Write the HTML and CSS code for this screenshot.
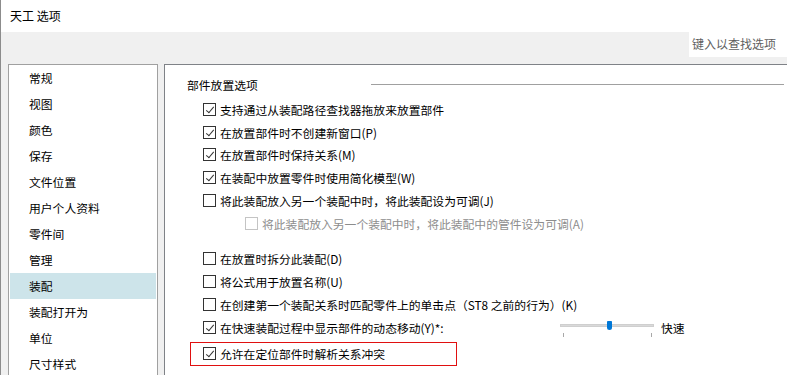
FILE: index.html
```html
<!DOCTYPE html>
<html lang="zh-CN">

<head>
    <meta charset="UTF-8">
    <meta name="viewport" content="width=device-width, initial-scale=1.0">
    <title>天工 选项</title>
    <link rel="stylesheet" href="styles.css">
</head>

<body>
    <div class="window">
        <div class="titlebar">天工 选项</div>
        <div class="toolbar">
            <div class="search">键入以查找选项</div>
        </div>
        <div class="main">
            <ul class="nav">
                <li>常规</li>
                <li>视图</li>
                <li>颜色</li>
                <li>保存</li>
                <li>文件位置</li>
                <li>用户个人资料</li>
                <li>零件间</li>
                <li>管理</li>
                <li class="active">装配</li>
                <li>装配打开为</li>
                <li>单位</li>
                <li>尺寸样式</li>
            </ul>
            <div class="page">
                <div class="group-head">
                    <span class="group-title">部件放置选项</span>
                    <span class="group-line"></span>
                </div>
                <div class="opt"><span class="cb checked"></span>支持通过从装配路径查找器拖放来放置部件</div>
                <div class="opt"><span class="cb checked"></span>在放置部件时不创建新窗口(P)</div>
                <div class="opt"><span class="cb checked"></span>在放置部件时保持关系(M)</div>
                <div class="opt"><span class="cb checked"></span>在装配中放置零件时使用简化模型(W)</div>
                <div class="opt"><span class="cb"></span>将此装配放入另一个装配中时，将此装配设为可调(J)</div>
                <div class="opt sub disabled"><span class="cb"></span>将此装配放入另一个装配中时，将此装配中的管件设为可调(A)</div>
                <div class="opt spaced"><span class="cb"></span>在放置时拆分此装配(D)</div>
                <div class="opt"><span class="cb"></span>将公式用于放置名称(U)</div>
                <div class="opt"><span class="cb"></span>在创建第一个装配关系时匹配零件上的单击点（ST8 之前的行为）(K)</div>
                <div class="opt">
                    <span class="opt-label"><span class="cb checked"></span>在快速装配过程中显示部件的动态移动(Y)*:</span>
                    <span class="slider">
                        <span class="track"></span>
                        <span class="thumb"></span>
                        <span class="tick left"></span>
                        <span class="tick right"></span>
                    </span>
                    <span class="speed">快速</span>
                </div>
                <div class="opt marked"><span class="cb checked"></span>允许在定位部件时解析关系冲突</div>
            </div>
        </div>
    </div>
</body>

</html>
```

FILE: styles.css
```css
body {
    margin: 0;
    font-family: "Noto Sans CJK SC", "Noto Sans", sans-serif;
    font-size: 11.8px;
    color: #000;
    background: #f0f0f0;
    overflow: hidden;
}

.window {
    height: 375px;
    border-left: 1px solid #8c8c8c;
    background: #f0f0f0;
    overflow: hidden;
}

.titlebar {
    height: 32px;
    line-height: 32px;
    padding-left: 9px;
    font-size: 12px;
    background: #fff;
}

.toolbar {
    height: 32px;
    display: flex;
    justify-content: flex-end;
}

.search {
    width: 95px;
    height: 25px;
    line-height: 24px;
    padding-left: 3px;
    font-size: 12px;
    color: #5f5f5f;
    background: #fff;
}

.main {
    display: flex;
    padding-left: 7px;
    gap: 6px;
}

/* left list */
.nav {
    list-style: none;
    margin: 0;
    padding: 0 1px;
    width: 150px;
    height: 330px;
    flex: none;
    background: #fff;
    border: 1px solid #a0a0a0;
    border-bottom: none;
    box-sizing: border-box;
}

.nav li {
    height: 26px;
    line-height: 26px;
    padding-left: 19px;
}

.nav li.active {
    background: #cde4ea;
}

/* right page */
.page {
    flex: none;
    width: 640px;
    height: 330px;
    padding-top: 10px;
    background: #fff;
    border-top: 1px solid #7f8287;
    border-left: 1px solid #7f8287;
    box-sizing: border-box;
}

.group-head {
    display: flex;
    align-items: center;
    height: 18px;
    padding-left: 22px;
    margin-bottom: 5px;
}

.group-title {
    width: 184px;
    flex: none;
}

.group-line {
    flex: 1;
    height: 1px;
    margin-right: 20px;
    background: #a0a0a0;
}

.opt {
    display: flex;
    align-items: center;
    height: 22.75px;
    padding-left: 38px;
    white-space: nowrap;
}

.opt.sub {
    padding-left: 80px;
}

.opt.disabled {
    color: #8d8d8d;
}

.opt.spaced {
    margin-top: 13px;
}

.opt-label {
    display: flex;
    align-items: center;
    width: 357px;
    flex: none;
}

.opt.marked {
    width: 253px;
    height: 22px;
    margin: 3px 0 0 25px;
    padding-left: 12px;
    border: 1px solid #e01010;
}

.cb {
    width: 13px;
    height: 13px;
    margin-right: 4px;
    flex: none;
    box-sizing: border-box;
    border: 1px solid #333;
    background: #fff;
    position: relative;
}

.disabled .cb {
    border-color: #c4c4c4;
}

.cb.checked::after {
    content: "";
    position: absolute;
    left: 4px;
    top: 1px;
    width: 3px;
    height: 7px;
    border-right: 1px solid #333;
    border-bottom: 1px solid #333;
    transform: rotate(40deg);
}

/* speed slider */
.slider {
    position: relative;
    width: 94px;
    height: 22px;
    flex: none;
}

.track {
    position: absolute;
    left: 0;
    right: 0;
    top: 8px;
    height: 3px;
    background: #d9d9d9;
    border: 1px solid #cfcfcf;
    box-sizing: border-box;
}

.thumb {
    position: absolute;
    left: 47px;
    top: 5px;
    width: 5px;
    height: 9px;
    background: #0078d7;
    border-radius: 1px 1px 3px 3px;
}

.tick {
    position: absolute;
    top: 17px;
    width: 1px;
    height: 4px;
    background: #a8a8a8;
}

.tick.left {
    left: 3px;
}

.tick.right {
    right: 2px;
}

.speed {
    margin-left: 7px;
}
```
